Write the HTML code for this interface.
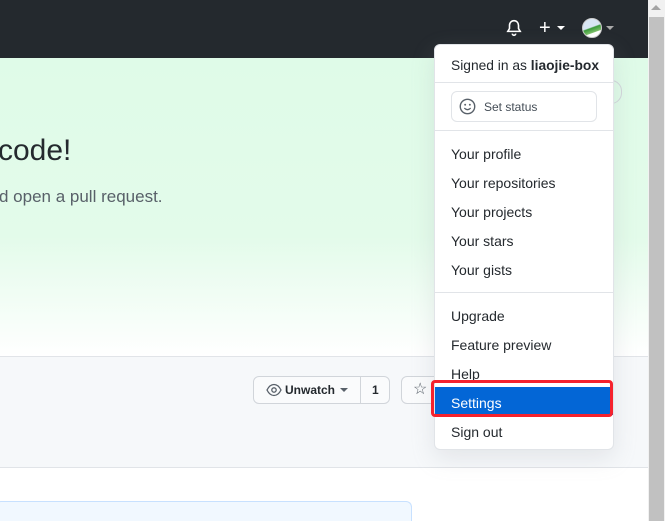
<!DOCTYPE html>
<html><head><meta charset="utf-8"><style>
*{margin:0;padding:0;box-sizing:border-box}
html,body{width:665px;height:521px;overflow:hidden}
body{font-family:"Liberation Sans",sans-serif;position:relative;background:#fff}
.hdr{position:absolute;left:0;top:0;width:648px;height:58px;background:#24292e}
.hero{position:absolute;left:0;top:58px;width:648px;height:298px;background:linear-gradient(180deg,#dffbe8 0%,#e3fbea 60%,#ffffff 100%)}
.gray{position:absolute;left:0;top:356px;width:648px;height:112px;background:#f6f8fa;border-top:1px solid #e1e4e8;border-bottom:1px solid #e1e4e8}
.sb{position:absolute;left:648px;top:0;width:17px;height:521px;background:#f1f1f1}
.thumb{position:absolute;left:649px;top:17px;width:15px;height:504px;background:#c1c1c1}
h1{position:absolute;left:-2px;top:134px;font-size:30px;font-weight:400;color:#24292e}
.sub{position:absolute;left:-1px;top:187px;font-size:17px;color:#586069}
.btn{position:absolute;top:376px;height:28px;border:1px solid #d1d5da;border-radius:6px;background:#fafbfc;font-size:12px;font-weight:bold;color:#24292e}
.menu{position:absolute;left:434px;top:44px;width:180px;height:406px;background:#fff;border:1px solid #e1e4e8;border-radius:6px;box-shadow:0 8px 24px rgba(149,157,165,.2);font-size:14px;color:#24292e}
.menu .it{position:absolute;left:16px}
.sep{position:absolute;left:0;width:178px;border-top:1px solid #e1e4e8}
.box{position:absolute;left:-5px;top:501px;width:417px;height:20px;border:1px solid #c8e1ff;border-bottom:0;border-radius:6px 6px 0 0;background:#f1f8ff}
</style></head><body>
<div class="hdr"></div>
<svg style="position:absolute;left:505px;top:19px" width="18" height="18" viewBox="0 0 16 16"><path d="M8 1.5a4 4 0 0 0-4 4v3L2.5 11h11L12 8.5v-3a4 4 0 0 0-4-4zM6.5 13a1.5 1.5 0 0 0 3 0" fill="none" stroke="#fff" stroke-width="1.4"/></svg>
<div style="position:absolute;left:539px;top:19px;color:#fff;font-size:20px;line-height:18px">+</div>
<div style="position:absolute;left:557px;top:26px;border:4px solid transparent;border-top:4px solid #fff"></div>
<div style="position:absolute;left:582px;top:18px;width:20px;height:20px;border-radius:50%;background:linear-gradient(160deg,#d8e6f3 45%,#3a9a3a 50%,#7dc06a 70%,#fff 72%);border:1px solid #ccc"></div>
<div style="position:absolute;left:606px;top:26px;border:4px solid transparent;border-top:4px solid #aaa"></div>
<div style="position:absolute;left:589px;top:39px;border:6px solid transparent;border-bottom:6px solid #fff"></div>
<div class="hero"></div>
<div style="position:absolute;left:600px;top:80px;width:22px;height:24px;border:1px solid #d1d5da;border-radius:12px"></div>
<h1>code!</h1>
<div class="sub">d open a pull request.</div>
<div class="gray"></div>
<div class="btn" style="left:253px;width:137px"></div>
<div style="position:absolute;left:360px;top:377px;width:1px;height:27px;background:#d1d5da"></div>
<svg style="position:absolute;left:266px;top:383px" width="16" height="14" viewBox="0 0 16 14"><path d="M1 7c2-4 4-5.5 7-5.5S13 3 15 7c-2 4-4 5.5-7 5.5S3 11 1 7z" fill="none" stroke="#586069" stroke-width="1.3"/><circle cx="8" cy="7" r="2.2" fill="none" stroke="#586069" stroke-width="1.3"/></svg>
<div style="position:absolute;left:285px;top:383px;font-size:12px;font-weight:bold;color:#24292e">Unwatch</div>
<div style="position:absolute;left:340px;top:388px;border:4px solid transparent;border-top:4px solid #586069"></div>
<div style="position:absolute;left:372px;top:383px;font-size:12px;font-weight:bold;color:#24292e">1</div>
<div class="btn" style="left:401px;width:40px"></div>
<div style="position:absolute;left:413px;top:379px;font-size:16px;color:#586069">☆</div>
<div class="box"></div>
<div class="menu">
<div class="it" style="top:13px;font-size:13.8px">Signed in as <b>liaojie-box</b></div>
<div class="sep" style="top:37px"></div>
<div style="position:absolute;left:16px;top:46px;width:146px;height:31px;border:1px solid #e1e4e8;border-radius:6px"></div>
<svg style="position:absolute;left:24px;top:53px" width="17" height="17" viewBox="0 0 16 16"><circle cx="8" cy="8" r="6.8" fill="none" stroke="#586069" stroke-width="1.3"/><circle cx="5.8" cy="6.3" r=".9" fill="#586069"/><circle cx="10.2" cy="6.3" r=".9" fill="#586069"/><path d="M5 9.5q3 3 6 0" fill="none" stroke="#586069" stroke-width="1.2"/></svg>
<div class="it" style="left:49px;top:55px;font-size:12px;color:#444d56">Set status</div>
<div class="sep" style="top:85px"></div>
<div class="it" style="top:101px">Your profile</div>
<div class="it" style="top:130px">Your repositories</div>
<div class="it" style="top:159px">Your projects</div>
<div class="it" style="top:188px">Your stars</div>
<div class="it" style="top:217px">Your gists</div>
<div class="sep" style="top:247px"></div>
<div class="it" style="top:263px">Upgrade</div>
<div class="it" style="top:292px">Feature preview</div>
<div class="it" style="top:321px">Help</div>
<div style="position:absolute;left:0;top:342px;width:178px;height:28px;background:#0366d6"></div>
<div class="it" style="top:350px;color:#fff">Settings</div>
<div class="it" style="top:379px">Sign out</div>
</div>
<div style="position:absolute;left:431px;top:380px;width:182px;height:37px;border:3px solid #f5222d;border-radius:4px"></div>
<div class="sb"></div><div class="thumb"></div>
<div style="position:absolute;left:651px;top:5px;border:5px solid transparent;border-bottom:5px solid #a3a3a3;border-top:0"></div>
</body></html>
